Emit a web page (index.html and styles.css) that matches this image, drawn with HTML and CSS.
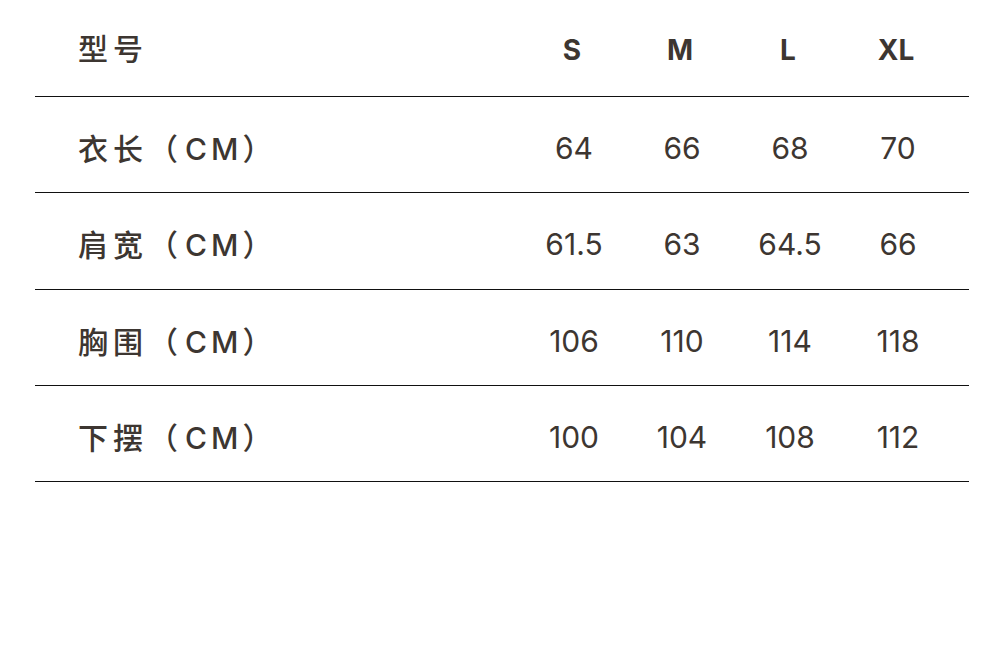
FILE: index.html
```html
<!DOCTYPE html>
<html lang="zh">
<head>
<meta charset="utf-8">
<link rel="stylesheet" href="styles.css">
</head>
<body>
<div class="sheet">
  <div class="row head">
    <div class="label">型号</div>
    <div class="cell">S</div>
    <div class="cell">M</div>
    <div class="cell">L</div>
    <div class="cell">XL</div>
  </div>
  <div class="row">
    <div class="label">衣长（<span class="unit">CM</span>）</div>
    <div class="cell">64</div>
    <div class="cell">66</div>
    <div class="cell">68</div>
    <div class="cell">70</div>
  </div>
  <div class="row">
    <div class="label">肩宽（<span class="unit">CM</span>）</div>
    <div class="cell">61.5</div>
    <div class="cell">63</div>
    <div class="cell">64.5</div>
    <div class="cell">66</div>
  </div>
  <div class="row">
    <div class="label">胸围（<span class="unit">CM</span>）</div>
    <div class="cell">106</div>
    <div class="cell">110</div>
    <div class="cell">114</div>
    <div class="cell">118</div>
  </div>
  <div class="row">
    <div class="label">下摆（<span class="unit">CM</span>）</div>
    <div class="cell">100</div>
    <div class="cell">104</div>
    <div class="cell">108</div>
    <div class="cell">112</div>
  </div>
</div>
</body>
</html>
```
FILE: styles.css
```css
* { box-sizing: border-box; }
html, body { margin: 0; padding: 0; background: #fff; }
body {
  width: 1000px;
  height: 647px;
  color: #3d3631;
  font-family: Inter, "Noto Sans CJK SC", sans-serif;
}
.sheet {
  padding: 0 31px 0 35px;
}
.row {
  display: grid;
  grid-template-columns: 1fr repeat(4, 108px);
  align-items: center;
  height: 96.25px;
  border-bottom: 1px solid #111;
  padding: 7px 19px 0 43px;
}
.row.head {
  height: 97px;
  padding-top: 4px;
}
.label {
  font-family: "Noto Sans CJK SC", sans-serif;
  font-size: 30px;
  letter-spacing: 5px;
  line-height: 1;
  font-weight: 500;
}
.unit {
  font-family: Inter, sans-serif;
  font-weight: 500;
  letter-spacing: 4px;
  margin-left: 2px;
}
.head .label {
  margin-top: -6px;
}
.cell {
  text-align: center;
  font-size: 30px;
  line-height: 1;
  font-weight: 400;
  padding-left: 4px;
}
.head .cell {
  font-size: 28px;
  font-weight: 700;
  padding-left: 0;
}
```
